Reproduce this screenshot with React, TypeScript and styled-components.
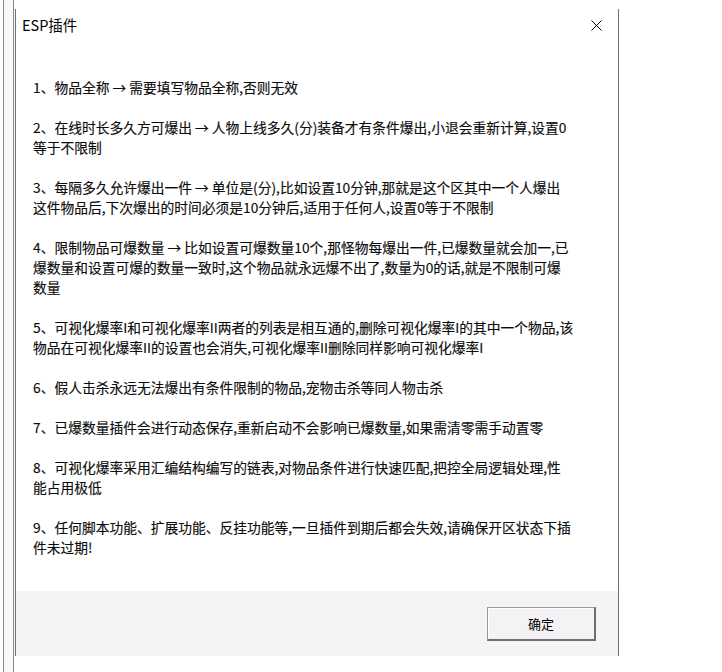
import styled, { createGlobalStyle } from 'styled-components';

const GlobalStyle = createGlobalStyle`
  html, body {
    margin: 0;
    padding: 0;
    background: #ffffff;
  }
  body {
    font-family: "Noto Sans CJK SC", "Noto Sans", sans-serif;
    color: #111;
  }
`;

// Page frame
const Page = styled.div`
  display: flex;
  width: 722px;
  height: 672px;
  overflow: hidden;
  background: #ffffff;
`;

const LeftRail = styled.div`
  width: 15px;
  height: 100%;
  flex: none;
  box-sizing: border-box;
  background: #f8f7fa;
  border-left: 3px solid #ffffff;
  display: flex;
`;

const RailLine = styled.div`
  width: 1px;
  height: 100%;
  background: #8a8a8a;
`;

const RailGap = styled.div`
  width: ${({ $w }: { $w: number }) => $w}px;
  height: 100%;
`;

// Dialog
const Dialog = styled.div`
  margin-top: 9px;
  width: 604px;
  height: 647px;
  box-sizing: border-box;
  border-left: 1px solid #707070;
  border-right: 1px solid #707070;
  background: #ffffff;
  display: flex;
  flex-direction: column;
`;

const TitleBar = styled.div`
  height: 32px;
  flex: none;
  display: flex;
  align-items: center;
  justify-content: space-between;
  padding: 0 16px 0 6px;
`;

const Title = styled.div`
  font-size: 14.5px;
  color: #000;
  line-height: 16px;
`;

const CloseButton = styled.button`
  width: 12px;
  height: 12px;
  padding: 0;
  border: none;
  background: transparent;
  display: flex;
  align-items: center;
  justify-content: center;
`;

const Content = styled.div`
  flex: 1;
  padding: 36px 0 0 17px;
`;

const Paragraph = styled.div`
  margin-bottom: 20px;
`;

const Line = styled.div`
  font-size: 13.75px;
  line-height: 20px;
  white-space: nowrap;
  color: #0c0c0c;
  -webkit-text-stroke: 0.15px #0c0c0c;
`;

const Footer = styled.div`
  height: 65px;
  flex: none;
  background: #f6f3f6;
  display: flex;
  align-items: center;
  justify-content: flex-end;
  padding-right: 22px;
`;

const OkButton = styled.button`
  width: 109px;
  height: 34px;
  box-sizing: border-box;
  background: #f5f2f5;
  border-top: 1px solid #9a9a9a;
  border-left: 1px solid #9a9a9a;
  border-right: 2px solid #6e6e6e;
  border-bottom: 2px solid #6e6e6e;
  box-shadow: inset 1px 1px 0 #ffffff;
  font-family: "Noto Sans CJK SC", sans-serif;
  font-size: 13px;
  color: #000;
  padding: 0;
  margin-top: 1px;
`;

const items: string[][] = [
  ['1、物品全称 → 需要填写物品全称,否则无效'],
  [
    '2、在线时长多久方可爆出 → 人物上线多久(分)装备才有条件爆出,小退会重新计算,设置0',
    '等于不限制',
  ],
  [
    '3、每隔多久允许爆出一件 → 单位是(分),比如设置10分钟,那就是这个区其中一个人爆出',
    '这件物品后,下次爆出的时间必须是10分钟后,适用于任何人,设置0等于不限制',
  ],
  [
    '4、限制物品可爆数量 → 比如设置可爆数量10个,那怪物每爆出一件,已爆数量就会加一,已',
    '爆数量和设置可爆的数量一致时,这个物品就永远爆不出了,数量为0的话,就是不限制可爆',
    '数量',
  ],
  [
    '5、可视化爆率I和可视化爆率II两者的列表是相互通的,删除可视化爆率I的其中一个物品,该',
    '物品在可视化爆率II的设置也会消失,可视化爆率II删除同样影响可视化爆率I',
  ],
  ['6、假人击杀永远无法爆出有条件限制的物品,宠物击杀等同人物击杀'],
  ['7、已爆数量插件会进行动态保存,重新启动不会影响已爆数量,如果需清零需手动置零'],
  [
    '8、可视化爆率采用汇编结构编写的链表,对物品条件进行快速匹配,把控全局逻辑处理,性',
    '能占用极低',
  ],
  [
    '9、任何脚本功能、扩展功能、反挂功能等,一旦插件到期后都会失效,请确保开区状态下插',
    '件未过期!',
  ],
];

const App = () => {
  return (
    <>
      <GlobalStyle />
      <Page>
        <LeftRail>
          <RailLine />
          <RailGap $w={9} />
          <RailLine />
        </LeftRail>
        <Dialog>
          <TitleBar>
            <Title>ESP插件</Title>
            <CloseButton aria-label="关闭">
              <svg width="11" height="11" viewBox="0 0 11 11">
                <path d="M0.5 0.5 L10.5 10.5 M10.5 0.5 L0.5 10.5" stroke="#000" strokeWidth="1" />
              </svg>
            </CloseButton>
          </TitleBar>
          <Content>
            {items.map((lines, i) => (
              <Paragraph key={i}>
                {lines.map((l, j) => (
                  <Line key={j}>{l}</Line>
                ))}
              </Paragraph>
            ))}
          </Content>
          <Footer>
            <OkButton>确定</OkButton>
          </Footer>
        </Dialog>
      </Page>
    </>
  );
};

export default App;
